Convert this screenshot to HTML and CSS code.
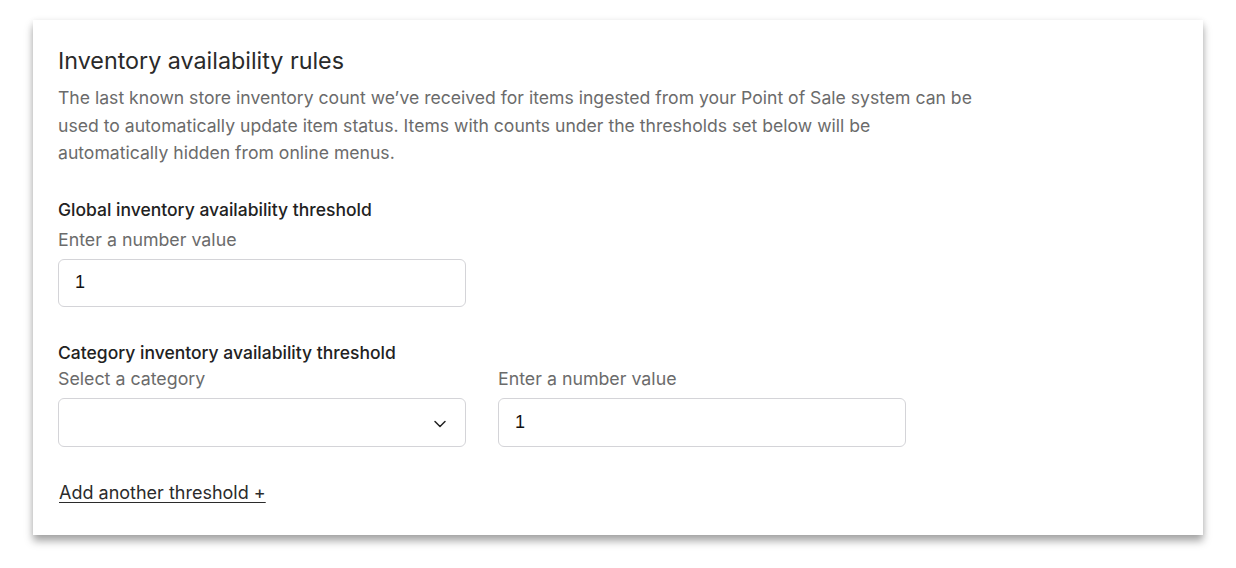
FILE: index.html
```html
<!DOCTYPE html>
<html>
<head>
<meta charset="utf-8">
<link rel="stylesheet" href="styles.css">
</head>
<body>
<div class="page">
  <section class="card">
    <h1 class="title">Inventory availability rules</h1>
    <p class="desc">The last known store inventory count we’ve received for items ingested from your Point of Sale system can be used to automatically update item status. Items with counts under the thresholds set below will be automatically hidden from online menus.</p>

    <div class="group">
      <div class="group-label">Global inventory availability threshold</div>
      <div class="field">
        <label class="field-label">Enter a number value</label>
        <div class="input"><span class="value">1</span></div>
      </div>
    </div>

    <div class="group group-cat">
      <div class="group-label">Category inventory availability threshold</div>
      <div class="row">
        <div class="field">
          <label class="field-label">Select a category</label>
          <div class="input select">
            <span class="value"></span>
            <svg class="chev" width="14" height="14" viewBox="0 0 14 14"><path d="M2 4.5 L7 9.5 L12 4.5" fill="none" stroke="#222" stroke-width="1.5" stroke-linecap="round" stroke-linejoin="round"/></svg>
          </div>
        </div>
        <div class="field">
          <label class="field-label">Enter a number value</label>
          <div class="input"><span class="value">1</span></div>
        </div>
      </div>
    </div>

    <a class="add" href="#">Add another threshold +</a>
  </section>
</div>
</body>
</html>
```
FILE: styles.css
```css
html, body {
  margin: 0;
  padding: 0;
  background: #ffffff;
}
body {
  font-family: Inter, "Liberation Sans", sans-serif;
  color: #2b2b2b;
}
.page {
  padding: 20px 33px 33px 33px;
}
.card {
  width: 1170px;
  height: 515px;
  box-sizing: border-box;
  background: #fff;
  box-shadow: 0 6px 8px rgba(0,0,0,0.35), 0 0 6px rgba(0,0,0,0.06);
  padding: 26px 25px 0 25px;
}
.title {
  margin: 0;
  font-size: 23.3px;
  font-weight: 400;
  line-height: 30px;
  color: #2a2a2a;
}
.desc {
  margin: 8px 0 0 0;
  width: 921px;
  font-size: 17.6px;
  line-height: 27.5px;
  color: #6b6b6b;
}
.group {
  margin-top: 30px;
}
.group-label {
  font-size: 17.5px;
  font-weight: 500;
  line-height: 26px;
  color: #222;
}
.field {
  display: flex;
  flex-direction: column;
  width: 408px;
}
.field-label {
  font-size: 17.8px;
  line-height: 26px;
  color: #6b6b6b;
  margin-top: 4px;
}
.input {
  margin-top: 6px;
  height: 48px;
  box-sizing: border-box;
  border: 1px solid #d4d4d8;
  border-radius: 6px;
  display: flex;
  align-items: center;
  padding: 0 16px;
  justify-content: space-between;
}
.value {
  font-family: "Liberation Sans", Arial, sans-serif;
  font-size: 18px;
  color: #111;
}
.chev {
  margin-right: 2px;
  margin-top: 3px;
}
.group-cat {
  margin-top: 33px;
}
.group-cat .field-label {
  margin-top: 0;
}
.group-cat .input {
  margin-top: 6px;
  height: 49px;
}
.row {
  display: flex;
  gap: 32px;
}
.add {
  display: inline-block;
  margin-top: 33px;
  margin-left: 1px;
  font-size: 18px;
  line-height: 26px;
  color: #2b2b2b;
  text-decoration: underline;
  text-underline-offset: 3px;
}
```
